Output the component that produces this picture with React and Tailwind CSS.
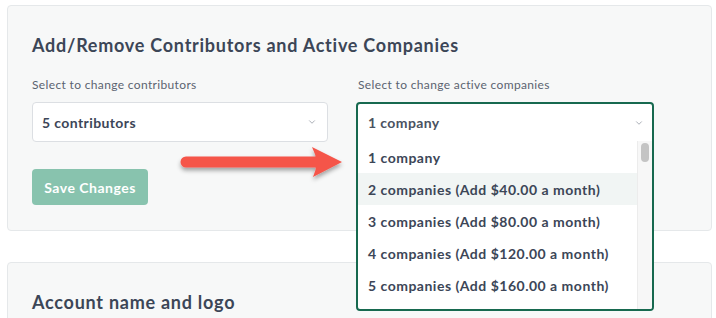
import { ChevronDown } from "lucide-react";

const options = [
  "1 company",
  "2 companies (Add $40.00 a month)",
  "3 companies (Add $80.00 a month)",
  "4 companies (Add $120.00 a month)",
  "5 companies (Add $160.00 a month)",
];

function Arrow() {
  return (
    <svg width="170" height="44" viewBox="0 0 170 44" className="overflow-visible">
      <defs>
        <filter id="sh" x="-10%" y="-40%" width="120%" height="200%">
          <feDropShadow dx="0" dy="3" stdDeviation="2" floodColor="#000" floodOpacity="0.35" />
        </filter>
      </defs>
      <g filter="url(#sh)">
        <line x1="10" y1="24" x2="142" y2="24" stroke="#f5554a" strokeWidth="11" strokeLinecap="round" />
        <path d="M136 9 L166 24 L137 39 Q144 24 136 9 Z" fill="#f5554a" />
      </g>
    </svg>
  );
}

function App() {
  return (
    <div
      className="w-[716px] h-[318px] overflow-hidden bg-white pt-[5px] pl-[7px] pr-1"
      style={{ fontFamily: "Lato, 'Noto Sans', sans-serif" }}
    >
      <div className="rounded border border-[#e5e8ea] bg-[#f7f8f8] pl-6 pt-[27px] pb-[25px]">
        <h2 className="text-[18px] leading-6 font-bold text-[#3c4657] tracking-[0.75px]">
          Add/Remove Contributors and Active Companies
        </h2>
        <div className="mt-5 grid grid-cols-[296px_298px] gap-x-7">
          <div>
            <div className="text-[12px] leading-4 text-[#5b6370] tracking-[0.35px]">Select to change contributors</div>
            <div className="mt-[9px] h-10 rounded border border-[#dcdfe3] bg-white flex items-center justify-between pl-[9px] pr-2.5">
              <span className="text-[14px] font-bold text-[#3c4657] tracking-[0.4px]">5 contributors</span>
              <ChevronDown size={10} strokeWidth={2} className="text-[#9aa0a8]" />
            </div>
            <button className="mt-[27px] h-9 w-[116px] rounded bg-[#88c3ae] text-white text-[14px] font-bold tracking-[0.5px]">
              Save Changes
            </button>
          </div>
          <div className="relative">
            <div className="text-[12px] leading-4 text-[#5b6370] pl-0.5 tracking-[0.35px]">Select to change active companies</div>
            <div className="relative mt-[9px] h-10">
              <div className="absolute left-0 top-0 w-[298px] z-10 rounded border-2 border-[#17694f] bg-white overflow-hidden">
                <div className="h-[37px] flex items-center justify-between pl-2.5 pr-2">
                  <span className="text-[14px] font-bold text-[#4a5261] tracking-[0.4px]">1 company</span>
                  <ChevronDown size={10} strokeWidth={2} className="text-[#9aa0a8]" />
                </div>
                <div className="flex h-[168px]">
                  <div className="flex-1 flex flex-col">
                    {options.map((o, i) => (
                      <div
                        key={o}
                        className={
                          "h-8 shrink-0 flex items-center pl-2.5 text-[14px] font-bold text-[#3c4657] tracking-[0.5px] " +
                          (i === 1 ? "bg-[#f1f5f4]" : "bg-white")
                        }
                      >
                        {o}
                      </div>
                    ))}
                  </div>
                  <div className="w-[15px] bg-[#f7f7f7] border-l border-[#ececec] pt-0.5 flex justify-center">
                    <div className="w-[8px] h-[19px] rounded-full bg-[#c4c4c4]" />
                  </div>
                </div>
              </div>
            </div>
            <div className="absolute -left-[180px] top-[61px]">
              <Arrow />
            </div>
          </div>
        </div>
      </div>
      <div className="mt-[31px] rounded border border-[#e5e8ea] bg-[#f7f8f8] pl-6 pt-[27px] h-[100px]">
        <h2 className="text-[18px] leading-6 font-bold text-[#3c4657] tracking-[0.75px]">Account name and logo</h2>
      </div>
    </div>
  );
}

export default App;
